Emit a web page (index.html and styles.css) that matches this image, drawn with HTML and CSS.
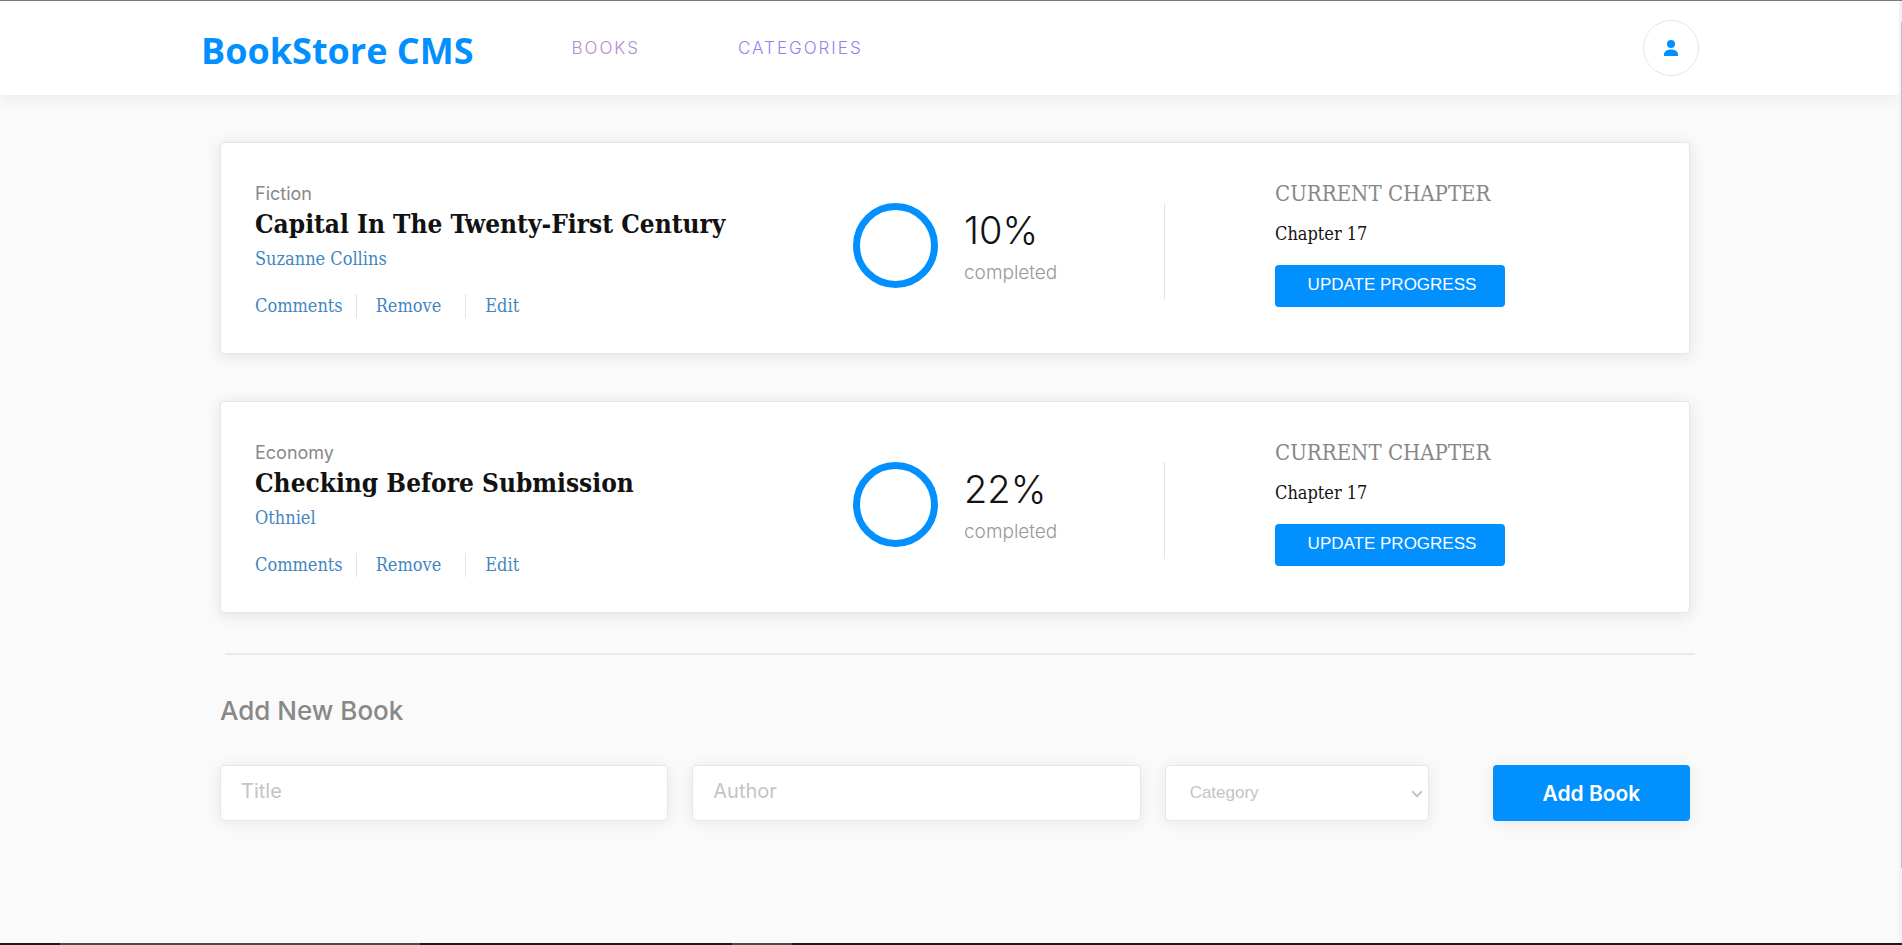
FILE: index.html
```html
<!DOCTYPE html>
<html lang="en">
<head>
<meta charset="utf-8">
<meta name="viewport" content="width=device-width, initial-scale=1">
<title>BookStore CMS</title>
<link rel="stylesheet" href="styles.css">
</head>
<body>
<div class="window">
  <div class="page">
    <header class="header">
      <h1 class="logo">BookStore CMS</h1>
      <nav class="nav">
        <a class="nav-link nav-link-visited" href="#books">BOOKS</a>
        <a class="nav-link" href="#categories">CATEGORIES</a>
      </nav>
      <button class="profile" type="button" aria-label="Profile">
        <svg class="profile-icon" viewBox="0 0 14 16" aria-hidden="true"><circle cx="7" cy="4" r="4"/><path d="M0 14.6C0 11.7 2.7 9.5 7 9.5s7 2.200 7 5.100V16H0z"/></svg>
      </button>
    </header>
    <main class="main">
      <ul class="books">
        <li class="book">
          <div class="info">
            <p class="genre">Fiction</p>
            <h2 class="title">Capital In The Twenty-First Century</h2>
            <a class="author" href="#author">Suzanne Collins</a>
            <div class="actions">
              <button class="action" type="button">Comments</button>
              <button class="action action-middle" type="button">Remove</button>
              <button class="action" type="button">Edit</button>
            </div>
          </div>
          <div class="progress">
            <div class="ring"></div>
            <div class="stats">
              <p class="percent">10%</p>
              <p class="completed">completed</p>
            </div>
          </div>
          <div class="chapter">
            <p class="chapter-label">CURRENT CHAPTER</p>
            <p class="chapter-name">Chapter 17</p>
            <button class="update" type="button">UPDATE PROGRESS</button>
          </div>
        </li>
        <li class="book">
          <div class="info">
            <p class="genre">Economy</p>
            <h2 class="title">Checking Before Submission</h2>
            <a class="author" href="#author">Othniel</a>
            <div class="actions">
              <button class="action" type="button">Comments</button>
              <button class="action action-middle" type="button">Remove</button>
              <button class="action" type="button">Edit</button>
            </div>
          </div>
          <div class="progress">
            <div class="ring"></div>
            <div class="stats">
              <p class="percent">22%</p>
              <p class="completed">completed</p>
            </div>
          </div>
          <div class="chapter">
            <p class="chapter-label">CURRENT CHAPTER</p>
            <p class="chapter-name">Chapter 17</p>
            <button class="update" type="button">UPDATE PROGRESS</button>
          </div>
        </li>
      </ul>
      <hr class="rule">
      <h2 class="form-title">Add New Book</h2>
      <form class="form">
        <input class="field" type="text" placeholder="Title" aria-label="Title">
        <input class="field" type="text" placeholder="Author" aria-label="Author">
        <div class="select-wrap">
          <select class="field category" aria-label="Category">
            <option>Category</option>
          </select>
          <svg class="chevron" viewBox="0 0 12 8" aria-hidden="true"><path d="M1.2 1.2 6 6.2l4.800-5"/></svg>
        </div>
        <button class="add" type="button">Add Book</button>
      </form>
    </main>
  </div>
  <div class="scrollbar"><div class="thumb"></div></div>
</div>
<footer class="taskbar"><span class="task task-wide"></span><span class="task"></span></footer>
</body>
</html>
```
FILE: styles.css
```css
* {
  box-sizing: border-box;
  margin: 0;
  padding: 0;
}

body {
  display: flex;
  flex-direction: column;
  min-height: 100vh;
  border-top: 1px solid #707b88;
  background: #fafafa;
  color: #121212;
  font-family: Inter, "Open Sans", sans-serif;
}

button {
  border: 0;
  background: none;
  cursor: pointer;
}

a {
  text-decoration: none;
}

.window {
  display: flex;
  flex: 1;
}

.page {
  flex: 1;
  min-width: 0;
}

.header {
  display: flex;
  align-items: center;
  height: 94px;
  padding: 0 200px 0 201px;
  background: #fff;
  box-shadow: 0 2px 16px rgba(0, 0, 0, 0.08);
}

.logo {
  color: #0290ff;
  font: bold 36px/50px "Open Sans", sans-serif;
  padding-top: 6px;
}

.nav {
  display: flex;
  flex: 1;
  gap: 98px;
  padding-left: 98px;
}

.nav-link {
  color: #8a86f0;
  font-size: 17px;
  font-weight: 300;
  line-height: 20px;
  letter-spacing: 2px;
}

.nav-link-visited {
  color: #b08bcf;
}

.profile {
  display: flex;
  align-items: center;
  justify-content: center;
  width: 56px;
  height: 56px;
  border: 1px solid #e4e4e4;
  border-radius: 50%;
}

.profile-icon {
  width: 14px;
  height: 16px;
  fill: #0290ff;
}

.main {
  padding: 47px 209px 0 220px;
}

.books {
  display: grid;
  gap: 47px;
  list-style: none;
}

.book {
  display: grid;
  grid-template-columns: 598fr 311fr 525fr;
  height: 212px;
  padding-left: 34px;
  border: 1px solid #e6e6e6;
  border-radius: 4px;
  background: #fff;
  box-shadow: 0 2px 16px rgba(0, 0, 0, 0.1);
}

.info {
  padding-top: 39px;
}

.genre {
  color: #888;
  font-size: 18px;
  line-height: 24px;
}

.title {
  font: bold 26px/36px "DejaVu Serif Condensed", "DejaVu Serif", serif;
  white-space: nowrap;
}

.author,
.action {
  color: #4386bf;
  font: 18px/24px "DejaVu Serif Condensed", "DejaVu Serif", serif;
}

.author {
  display: block;
  margin-top: 5px;
}

.actions {
  display: flex;
  margin-top: 23px;
}

.action-middle {
  margin: 0 19px 0 13px;
  padding: 0 24px 0 19px;
  border: solid #e4e4e4;
  border-width: 0 1px;
}

.progress {
  display: flex;
  gap: 26px;
  padding-top: 60px;
}

.ring {
  width: 85px;
  height: 85px;
  border: 7px solid #0290ff;
  border-radius: 50%;
}

.percent {
  font-size: 38px;
  font-weight: 300;
  line-height: 54px;
}

.completed {
  color: #999;
  font-size: 19px;
  font-weight: 300;
  line-height: 32px;
}

.chapter {
  position: relative;
  padding: 38px 0 0 111px;
}

.chapter::before {
  content: "";
  position: absolute;
  left: 0;
  top: 60px;
  width: 1px;
  height: 97px;
  background: #e4e4e4;
}

.chapter-label {
  color: #888;
  font: 22px/26px "DejaVu Serif Condensed", "DejaVu Serif", serif;
}

.chapter-name {
  margin-top: 14px;
  font: 18px/26px "DejaVu Serif Condensed", "DejaVu Serif", serif;
}

.update {
  display: block;
  width: 230px;
  height: 42px;
  margin-top: 18px;
  padding: 0 0 2px 4px;
  border-radius: 4px;
  background: #0290ff;
  color: #fff;
  font: 17px/20px "Liberation Sans", Arial, sans-serif;
}

.rule {
  position: relative;
  left: 5px;
  height: 2px;
  margin-top: 40px;
  border: 0;
  background: #ebe9ea;
}

.form-title {
  margin-top: 38px;
  color: #888;
  font-size: 26px;
  font-weight: 500;
  line-height: 36px;
}

.form {
  display: grid;
  grid-template-columns: 448fr 448fr 264fr 237fr;
  column-gap: 24px;
  margin-top: 36px;
}

.field {
  width: 100%;
  min-width: 0;
  height: 56px;
  padding: 0 20px 4px;
  border: 1px solid #e6e6e6;
  border-radius: 4px;
  background: #fff;
  box-shadow: 0 2px 16px rgba(0, 0, 0, 0.08);
  font: 20px Inter, "Open Sans", sans-serif;
}

.field::placeholder {
  color: #c4c4c4;
}

.select-wrap {
  position: relative;
}

.category {
  padding: 0 24px 2px;
  appearance: none;
  color: #c4c4c4;
  font: 17px "Liberation Sans", Arial, sans-serif;
}

.chevron {
  position: absolute;
  right: 6px;
  top: 25px;
  width: 12px;
  height: 8px;
  fill: none;
  stroke: #c4c4c4;
  stroke-width: 2;
  pointer-events: none;
}

.add {
  height: 56px;
  margin-left: 40px;
  border-radius: 4px;
  background: #0290ff;
  box-shadow: 0 2px 16px rgba(0, 0, 0, 0.08);
  color: #fff;
  font: 600 21px Inter, "Open Sans", sans-serif;
}

.scrollbar {
  width: 3px;
  padding: 21px 0 75px 2px;
  background: #f1f1f1;
}

.thumb {
  height: 100%;
  background: #c1c1c1;
}

.taskbar {
  display: flex;
  gap: 312px;
  height: 2px;
  padding-left: 60px;
  background: #1c1c1e;
}

.task {
  width: 60px;
  background: #4a4a4a;
}

.task-wide {
  width: 360px;
}
```
